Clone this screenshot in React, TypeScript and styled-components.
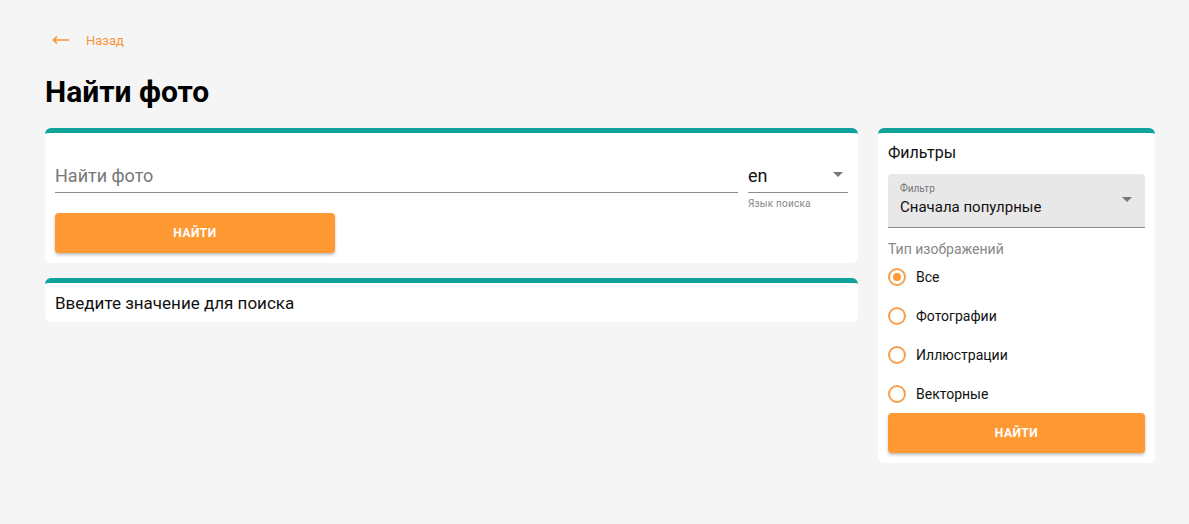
import styled, { createGlobalStyle } from "styled-components";

const GlobalStyle = createGlobalStyle`
  body {
    margin: 0;
    background: #f5f5f5;
    font-family: Roboto, "Liberation Sans", sans-serif;
    color: rgba(0, 0, 0, 0.87);
  }
`;

const Page = styled.div`
  padding: 28px 34px 40px 45px;
`;

const BackLink = styled.a`
  display: inline-flex;
  align-items: center;
  gap: 16px;
  margin-left: 7px;
  height: 24px;
  color: #f7943a;
  font-size: 13px;
  text-decoration: none;
`;

const Title = styled.h1`
  margin: 22px 0 18px;
  font-size: 30px;
  font-weight: 700;
  line-height: 36px;
  color: #000;
`;

const Layout = styled.div`
  display: grid;
  grid-template-columns: 813px 277px;
  gap: 20px;
  align-items: start;
`;

const Column = styled.div`
  display: flex;
  flex-direction: column;
  gap: 15px;
`;

const Card = styled.div<{ $pad?: string }>`
  background: #fff;
  border-top: 5px solid #0fa39b;
  border-radius: 6px;
  padding: ${(p) => p.$pad || "10px"};
`;

const SearchRow = styled.div`
  display: flex;
  gap: 10px;
  align-items: flex-start;
`;

const TextField = styled.div`
  flex: 1;
  height: 60px;
  display: flex;
  align-items: flex-end;
  border-bottom: 1px solid #8c8c8c;
  box-sizing: border-box;
  padding-bottom: 6px;
  font-size: 18px;
  color: #777;
`;

const SelectWrap = styled.div`
  width: 100px;
`;

const LangSelect = styled.div`
  height: 60px;
  display: flex;
  align-items: flex-end;
  justify-content: space-between;
  border-bottom: 1px solid #8c8c8c;
  box-sizing: border-box;
  padding-bottom: 6px;
  font-size: 18px;
  color: #111;
`;

const Helper = styled.div`
  margin-top: 5px;
  font-size: 10px;
  color: #8a8a8a;
  letter-spacing: 0.2px;
`;

const Caret = styled.span`
  width: 0;
  height: 0;
  border-left: 5px solid transparent;
  border-right: 5px solid transparent;
  border-top: 5px solid #777;
  margin: 0 5px 9px 0;
`;

const Button = styled.button<{ $w?: string; $mt?: string }>`
  display: block;
  width: ${(p) => p.$w || "100%"};
  height: 40px;
  margin-top: ${(p) => p.$mt || "0"};
  border: none;
  border-radius: 4px;
  background: #ff9933;
  color: #fff;
  font-family: Roboto, "Liberation Sans", sans-serif;
  font-weight: 700;
  font-size: 12px;
  letter-spacing: 0.5px;
  box-shadow: 0 2px 3px rgba(0, 0, 0, 0.25);
`;

const Message = styled.div`
  font-size: 17px;
  color: #111;
`;

const FilterTitle = styled.div`
  font-size: 16px;
  color: #111;
  line-height: 20px;
  margin-bottom: 11px;
`;

const FilledSelect = styled.div`
  position: relative;
  background: #e8e8e8;
  border-radius: 4px 4px 0 0;
  border-bottom: 1px solid #8c8c8c;
  height: 54px;
  box-sizing: border-box;
  padding: 9px 12px 0;
`;

const SmallLabel = styled.div`
  font-size: 10px;
  color: #777;
  line-height: 12px;
`;

const SelectValue = styled.div`
  margin-top: 3px;
  font-size: 15px;
  color: #111;
`;

const SelectCaret = styled(Caret)`
  position: absolute;
  right: 13px;
  top: 23px;
  margin: 0;
`;

const GroupLabel = styled.div`
  margin-top: 13px;
  font-size: 14px;
  color: #888;
`;

const RadioList = styled.div`
  display: flex;
  flex-direction: column;
  gap: 19px;
  margin-top: 10px;
  margin-bottom: 9px;
`;

const RadioRow = styled.label`
  display: flex;
  align-items: center;
  gap: 10px;
  font-size: 14px;
  color: #111;
  height: 20px;
`;

const RadioCircle = styled.span<{ $on?: boolean }>`
  width: 18px;
  height: 18px;
  box-sizing: border-box;
  border: 2px solid #f5a050;
  border-radius: 50%;
  display: flex;
  align-items: center;
  justify-content: center;

  &::after {
    content: "";
    width: 8px;
    height: 8px;
    border-radius: 50%;
    background: #ff9933;
    display: ${(p) => (p.$on ? "block" : "none")};
  }
`;

const types = ["Все", "Фотографии", "Иллюстрации", "Векторные"];

export default function App() {
  return (
    <>
      <GlobalStyle />
      <Page>
        <BackLink href="#">
          <svg width="18" height="10" viewBox="0 0 18 10">
            <path d="M17 5H2M5 1.5L1.5 5L5 8.5" stroke="#f7943a" strokeWidth="1.6" fill="none" />
          </svg>
          Назад
        </BackLink>
        <Title>Найти фото</Title>
        <Layout>
          <Column>
            <Card $pad="0 10px 10px">
              <SearchRow>
                <TextField>Найти фото</TextField>
                <SelectWrap>
                  <LangSelect>
                    en
                    <Caret />
                  </LangSelect>
                  <Helper>Язык поиска</Helper>
                </SelectWrap>
              </SearchRow>
              <Button $w="280px" $mt="4px">НАЙТИ</Button>
            </Card>
            <Card $pad="10px 10px 9px">
              <Message>Введите значение для поиска</Message>
            </Card>
          </Column>
          <Card $pad="10px">
            <FilterTitle>Фильтры</FilterTitle>
            <FilledSelect>
              <SmallLabel>Фильтр</SmallLabel>
              <SelectValue>Сначала популрные</SelectValue>
              <SelectCaret />
            </FilledSelect>
            <GroupLabel>Тип изображений</GroupLabel>
            <RadioList>
              {types.map((t, i) => (
                <RadioRow key={t}>
                  <RadioCircle $on={i === 0} />
                  {t}
                </RadioRow>
              ))}
            </RadioList>
            <Button>НАЙТИ</Button>
          </Card>
        </Layout>
      </Page>
    </>
  );
}
